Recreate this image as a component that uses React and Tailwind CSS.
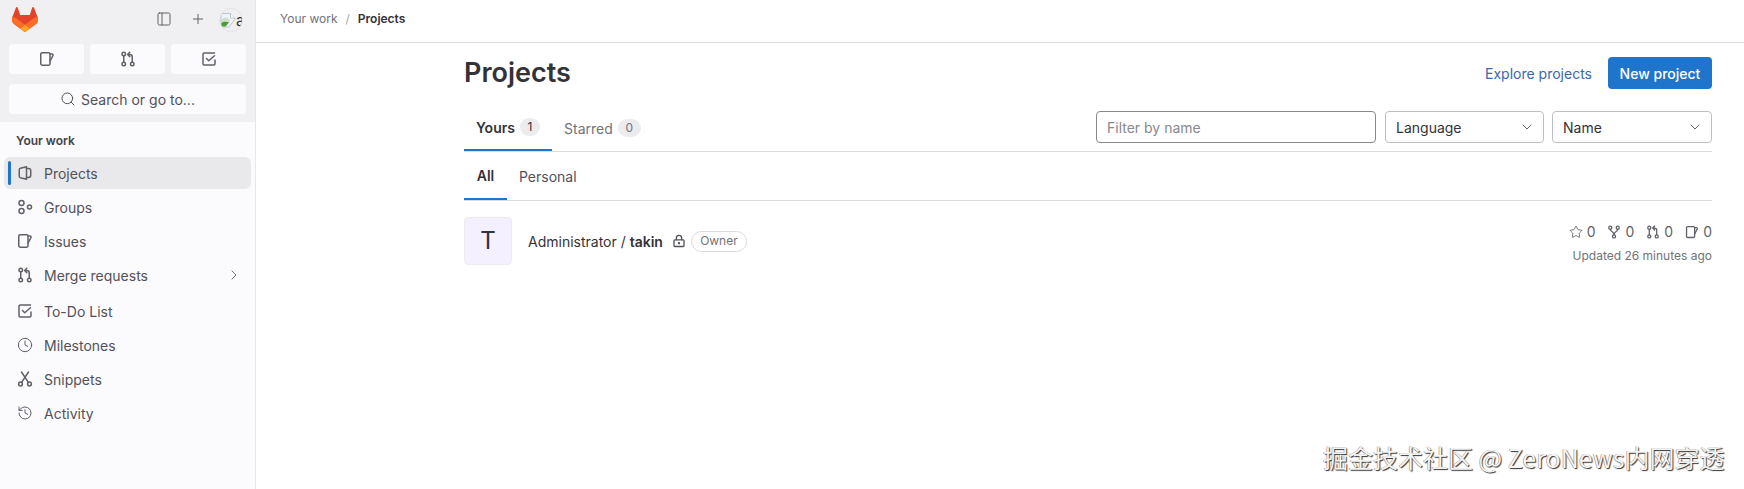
import { ChevronDown, ChevronRight, Clock, History, PanelLeft, Plus, Search, Star } from 'lucide-react';

const font = { fontFamily: 'Inter, "Noto Sans CJK SC", sans-serif' };

function Tanuki() {
  return (
    <svg viewBox="0 0 25 24" className="w-[26px] h-[25px]">
      <path fill="#E24329" d="m24.507 9.5-.034-.09L21.082.562a.896.896 0 0 0-1.694.091l-2.29 7.01H7.825L5.535.653a.898.898 0 0 0-1.694-.09L.451 9.411.416 9.5a6.297 6.297 0 0 0 2.09 7.278l.012.01.03.022 5.16 3.867 2.56 1.935 1.554 1.176a1.051 1.051 0 0 0 1.268 0l1.555-1.176 2.56-1.935 5.197-3.89.014-.01A6.297 6.297 0 0 0 24.507 9.5Z" />
      <path fill="#FC6D26" d="m24.507 9.5-.034-.09a11.44 11.44 0 0 0-4.56 2.051l-7.447 5.632 4.742 3.584 5.197-3.89.014-.01A6.297 6.297 0 0 0 24.507 9.5Z" />
      <path fill="#FCA326" d="m7.707 20.677 2.56 1.935 1.555 1.176a1.051 1.051 0 0 0 1.268 0l1.555-1.176 2.56-1.935-4.743-3.584-4.755 3.584Z" />
      <path fill="#FC6D26" d="M5.01 11.461a11.43 11.43 0 0 0-4.56-2.05L.416 9.5a6.297 6.297 0 0 0 2.09 7.278l.012.01.03.022 5.16 3.867 4.745-3.584-7.444-5.632Z" />
    </svg>
  );
}

// GitLab's own glyphs, redrawn on a 16 box
function Glyph({ children, className = 'w-4 h-4' }) {
  return (
    <svg viewBox="0 0 16 16" fill="none" stroke="currentColor" strokeWidth="1.5" strokeLinecap="round" strokeLinejoin="round" className={className}>
      {children}
    </svg>
  );
}

const IssueIcon = (p) => (
  <Glyph {...p}>
    <path d="M3.2 1.75h6.6c.7 0 1.2.5 1.2 1.2v9.9c0 .7-.5 1.4-1.2 1.4H3.2c-.8 0-1.45-.6-1.45-1.4v-9.9c0-.7.65-1.2 1.45-1.2Z" />
    <path d="M11 3h2.1c.7 0 1.2.7.9 1.4L11.2 10" />
  </Glyph>
);

const MergeIcon = (p) => (
  <Glyph {...p}>
    <circle cx="3.75" cy="3" r="1.75" />
    <circle cx="3.75" cy="13" r="1.75" />
    <circle cx="12.25" cy="13" r="1.75" />
    <path d="M3.75 5v6M12.25 11V6c0-1.4-.9-2.5-2.5-2.5H8M9.8 1.2 7.6 3.5l2.2 2.2" />
  </Glyph>
);

const TodoIcon = (p) => (
  <Glyph {...p}>
    <path d="M13.5 2H3.2C2.5 2 2 2.5 2 3.2v9.6c0 .7.5 1.2 1.2 1.2h9.6c.7 0 1.2-.5 1.2-1.2V9" />
    <path d="m5.5 7.5 2.2 2.2 5.8-5" />
  </Glyph>
);

const ProjectIcon = (p) => (
  <Glyph {...p}>
    <path d="M9.5 1.75 3.4 3.3c-.6.2-1.15.7-1.15 1.4v6.6c0 .7.55 1.2 1.15 1.4l6.1 1.55V1.75Z" />
    <path d="M9.5 3.5h2c1.3 0 2.25 1 2.25 2.2v4.6c0 1.2-.95 2.2-2.25 2.2h-2" />
  </Glyph>
);

const GroupIcon = (p) => (
  <Glyph {...p}>
    <circle cx="4.5" cy="4" r="2.5" />
    <circle cx="4.5" cy="12" r="2.5" />
    <circle cx="12.5" cy="8" r="2" />
  </Glyph>
);

const SnippetIcon = (p) => (
  <Glyph {...p}>
    <circle cx="3.5" cy="13" r="1.9" />
    <circle cx="12.5" cy="13" r="1.9" />
    <path d="M4.5 1 11.4 11.4M11.5 1 4.6 11.4" />
  </Glyph>
);

const LockIcon = (p) => (
  <Glyph {...p}>
    <rect x="2.25" y="6.75" width="11.5" height="7.5" rx="1" />
    <path d="M5 6.5V4.5a3 3 0 0 1 6 0v2" />
    <circle cx="8" cy="10.5" r="0.6" fill="currentColor" />
  </Glyph>
);

const ForkIcon = (p) => (
  <Glyph {...p}>
    <circle cx="3.75" cy="3" r="1.75" />
    <circle cx="12.25" cy="3" r="1.75" />
    <circle cx="8" cy="13" r="1.75" />
    <path d="M3.75 5c0 2.5 4.25 2.5 4.25 6M12.25 5c0 2.5-4.25 2.5-4.25 6" />
  </Glyph>
);

const nav = [
  { label: 'Projects', icon: ProjectIcon, active: true },
  { label: 'Groups', icon: GroupIcon },
  { label: 'Issues', icon: IssueIcon },
  { label: 'Merge requests', icon: MergeIcon, more: true },
  { label: 'To-Do List', icon: TodoIcon, gap: true },
  { label: 'Milestones', icon: (p) => <Clock {...p} strokeWidth={1.5} /> },
  { label: 'Snippets', icon: SnippetIcon },
  { label: 'Activity', icon: (p) => <History {...p} strokeWidth={1.5} /> },
];

function BrokenImage() {
  return (
    <svg viewBox="0 0 16 16" className="w-4 h-4 shrink-0">
      <path d="M1 1.5h9.5L15 6v1l-6 8H1Z" fill="#eef3fb" stroke="#a9b0b8" strokeWidth="0.7" />
      <path d="M1.4 8.5C3 6 5 5 7 6l3 2-1 3H1.4Z" fill="#cfe0c8" />
      <path d="M1.4 14.6V11c2-1.6 5-1.8 7.6-.6l-3.4 4.2Z" fill="#4c9a3c" />
      <path d="M10.5 1.5V6H15" fill="#fff" stroke="#a9b0b8" strokeWidth="0.7" />
    </svg>
  );
}

function Sidebar() {
  return (
    <aside className="w-[256px] shrink-0 h-[489px] flex flex-col bg-[#fbfafd] border-r border-[#e7e7ea]">
      <div className="bg-[#f0f0f2] h-[122px] px-[9px] shrink-0">
        <div className="h-[44px] flex items-center">
          <div className="ml-[3px] mb-[6px]"><Tanuki /></div>
          <div className="ml-auto flex items-center text-[#626168] mb-[6px]">
            <PanelLeft className="w-4 h-4" strokeWidth={1.5} />
            <Plus className="w-4 h-4 ml-[18px]" strokeWidth={1.5} />
            <div className="ml-[13px] mr-[3px] mt-[2px] w-6 h-6 rounded-full border border-[#e4e4e8] flex items-center text-[15px] leading-none text-[#333238] overflow-hidden">
              <BrokenImage />a
            </div>
          </div>
        </div>
        <div className="grid grid-cols-3 gap-[6px] text-[#626168]">
          {[IssueIcon, MergeIcon, TodoIcon].map((Icon, i) => (
            <div key={i} className="h-[30px] bg-[#fbfafd] rounded flex items-center justify-center">
              <Icon />
            </div>
          ))}
        </div>
        <div className="mt-[10px] h-[30px] bg-[#fbfafd] rounded flex items-center justify-center gap-[5px] text-[14px] text-[#535158]">
          <Search className="w-4 h-4" strokeWidth={1.5} />
          Search or go to...
        </div>
      </div>
      <div className="px-1 text-[14px] text-[#535158]">
        <div className="h-[28px] pl-3 flex items-end text-[12px] font-semibold text-[#434248]">Your work</div>
        <div className="mt-[7px]">
          {nav.map((item) => (
            <div
              key={item.label}
              className={`relative h-8 rounded-md flex items-center pl-[13px] pr-[9px] ${item.active ? 'bg-[#e9e9ec]' : ''} ${item.gap ? 'mt-[4px]' : 'mt-[2px]'}`}
            >
              {item.active && <span className="absolute left-[4px] top-[4px] w-[3px] h-6 rounded-sm bg-[#1f75cb]" />}
              <item.icon className="w-4 h-4 text-[#626168]" />
              <span className="ml-[11px]">{item.label}</span>
              {item.more && <ChevronRight className="w-4 h-4 ml-auto text-[#737278]" strokeWidth={1.5} />}
            </div>
          ))}
        </div>
      </div>
    </aside>
  );
}

function Select({ label, width }) {
  return (
    <div className={`${width} h-8 rounded border border-[#bfbfc3] flex items-center justify-between pl-[10px] pr-2 text-[14px] text-[#333238]`}>
      {label}
      <ChevronDown className="w-4 h-4 text-[#626168]" strokeWidth={1.5} />
    </div>
  );
}

function Stat({ icon, value }) {
  return (
    <span className="flex items-center gap-[4px] ml-3">
      {icon}
      {value}
    </span>
  );
}

export default function App() {
  return (
    <div className="relative w-[1744px] h-[489px] flex bg-white overflow-hidden" style={font}>
      <Sidebar />
      <main className="flex-1 min-w-0">
        <div className="h-[43px] border-b border-[#dcdcde] pl-[24px] pb-[4px] flex items-center text-[12px]">
          <span className="text-[#737278]">Your work</span>
          <span className="mx-2 text-[#a4a3a8]">/</span>
          <span className="font-semibold text-[#333238]">Projects</span>
        </div>
        <div className="pl-[208px] pr-8">
          <div className="h-[63px] pb-[2px] flex items-center justify-between">
            <h1 className="text-[27px] font-semibold text-[#333238]">Projects</h1>
            <div className="flex items-center mt-[-1px]">
              <span className="text-[14px] text-[#3a67ad]">Explore projects</span>
              <div className="ml-4 w-[104px] h-8 rounded bg-[#1f75cb] text-white text-[14px] font-medium flex items-center justify-center">New project</div>
            </div>
          </div>
          <div className="h-[46px] border-b border-[#dcdcde] flex items-start justify-between">
            <div className="flex h-[46px] text-[14px]">
              <div className="w-[88px] h-[45px] border-b-2 border-[#1f75cb] flex items-center pl-3 pb-[1px] font-semibold text-[#333238]">
                Yours
                <span className="ml-[5px] w-5 h-[18px] rounded-full bg-[#ececef] text-[12px] font-normal flex items-center justify-center">1</span>
              </div>
              <div className="h-[45px] flex items-center pl-3 pb-[1px] text-[#737278]">
                Starred
                <span className="ml-[5px] w-[23px] h-[18px] rounded-full bg-[#ececef] text-[12px] flex items-center justify-center">0</span>
              </div>
            </div>
            <div className="flex gap-2 mt-[5px]">
              <div className="w-[280px] mr-px h-8 rounded border border-[#89888d] flex items-center pl-[10px] text-[14px] text-[#89888d]">Filter by name</div>
              <Select label="Language" width="w-[159px]" />
              <Select label="Name" width="w-[160px]" />
            </div>
          </div>
          <div className="h-[49px] border-b border-[#dcdcde] flex text-[14px]">
            <div className="w-[43px] h-[48px] border-b-2 border-[#1f75cb] flex items-center justify-center font-semibold text-[#333238]">All</div>
            <div className="h-[48px] flex items-center pl-3 text-[#535158]">Personal</div>
          </div>
          <div className="mt-4 flex items-start">
            <div className="w-12 h-12 rounded bg-[#f4f0ff] border border-[#ececef] flex items-center justify-center text-[24px] text-[#333238]">T</div>
            <div className="ml-4 h-12 flex items-center text-[14px] text-[#333238]">
              Administrator /&nbsp;<span className="font-semibold">takin</span>
              <LockIcon className="w-[14px] h-[14px] ml-[9px] text-[#535158]" />
              <span className="ml-[5px] w-[56px] h-[21px] rounded-full border border-[#dcdcde] text-[12px] text-[#737278] flex items-center justify-center">Owner</span>
            </div>
            <div className="ml-auto mt-[4px] flex flex-col items-end text-[#626168]">
              <div className="flex items-center text-[14px]">
                <Stat icon={<Star className="w-[14px] h-[14px]" strokeWidth={1.5} />} value="0" />
                <Stat icon={<ForkIcon className="w-[14px] h-[14px]" />} value="0" />
                <Stat icon={<MergeIcon className="w-[14px] h-[14px]" />} value="0" />
                <Stat icon={<IssueIcon className="w-[14px] h-[14px]" />} value="0" />
              </div>
              <div className="text-[12px] text-[#737278] mt-[5px]">Updated 26 minutes ago</div>
            </div>
          </div>
        </div>
      </main>
      <div className="absolute left-[1323px] top-[439px] text-[25px] leading-[36px] whitespace-nowrap text-[#f4f4f4] [text-shadow:1px_1px_1px_#333,-0.5px_-0.5px_0.5px_#888]" style={{ fontFamily: '"Noto Sans CJK SC", Inter, sans-serif' }}>
        掘金技术社区 @ ZeroNews内网穿透
      </div>
    </div>
  );
}
